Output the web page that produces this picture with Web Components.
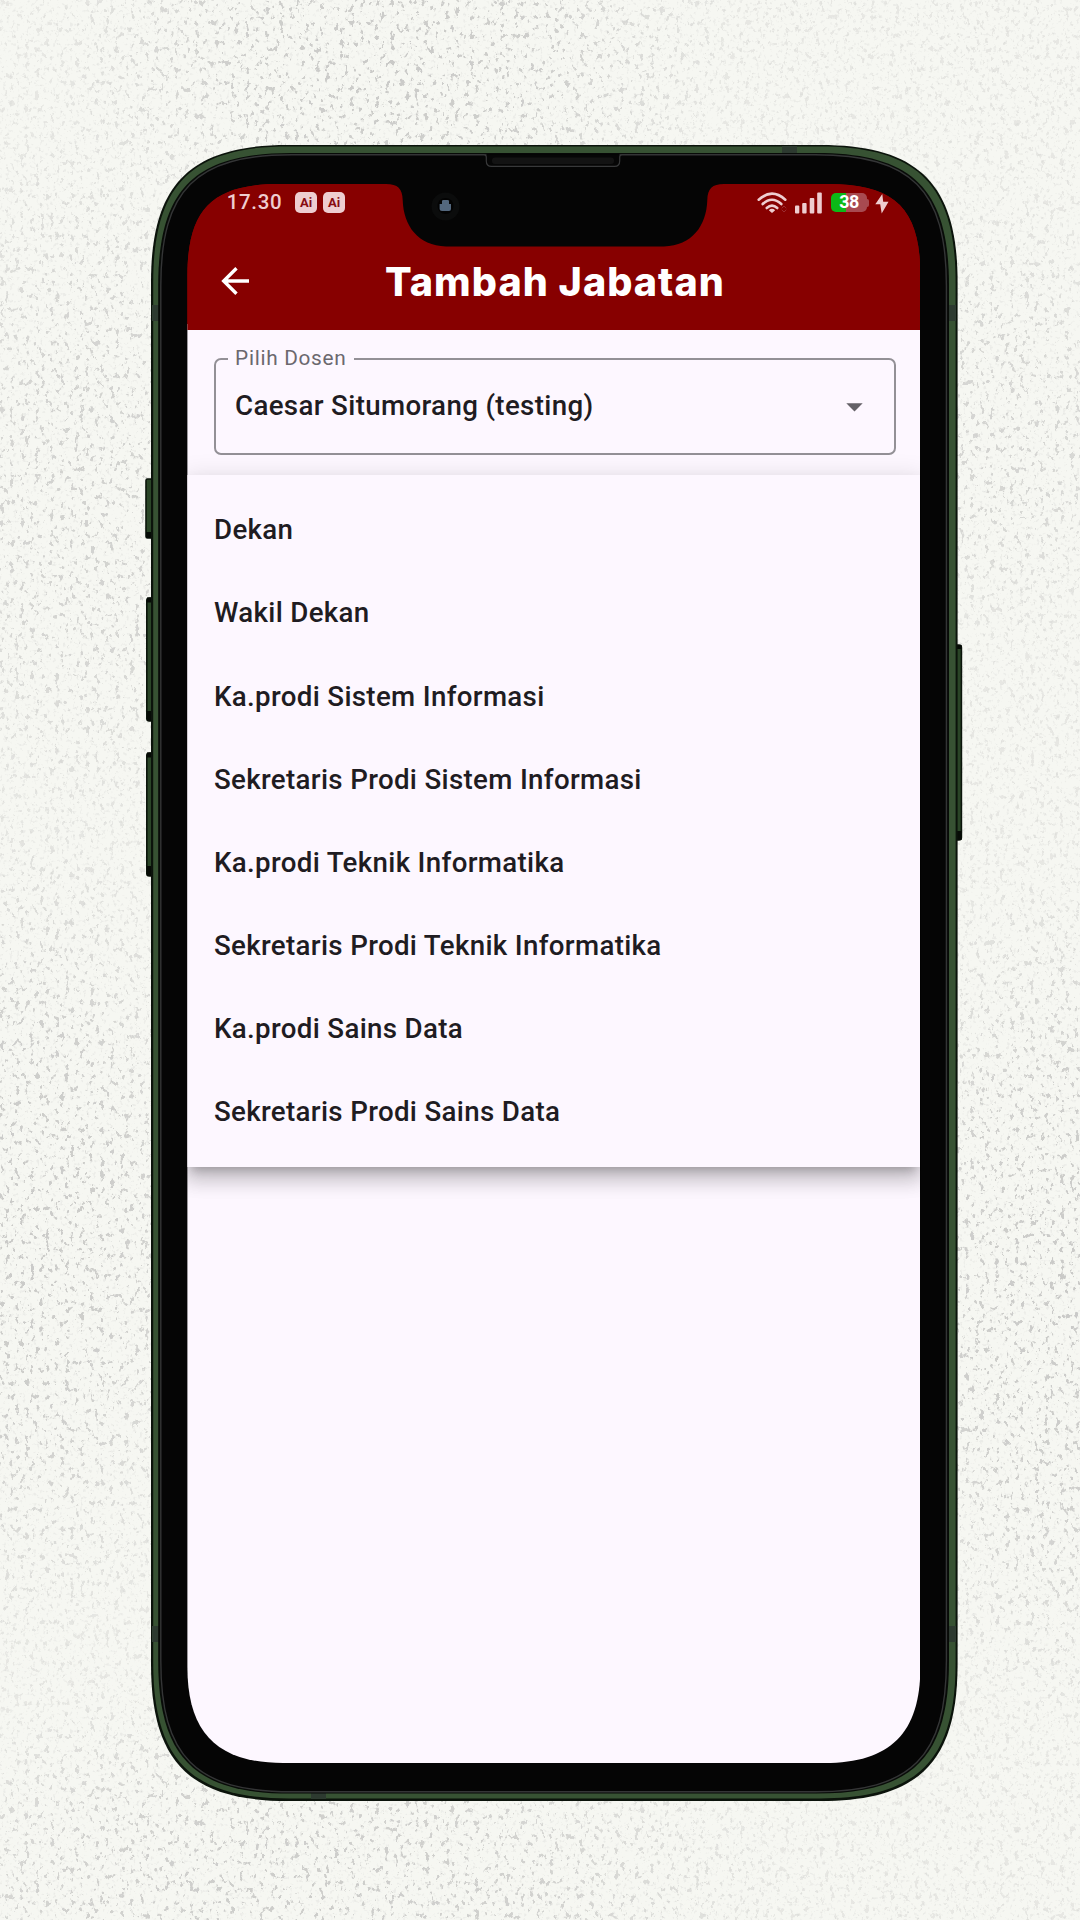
<!DOCTYPE html>
<html lang="id">
<head>
<meta charset="utf-8">
<title>Tambah Jabatan</title>
<style>
  html, body { margin: 0; }
  body { width: 1080px; height: 1920px; overflow: hidden; font-family: Roboto, sans-serif; }
</style>
</head>
<body>
<paper-backdrop>
  <phone-frame>
    <status-bar slot="screen" time="17.30" battery="38"></status-bar>
    <app-bar slot="screen">Tambah Jabatan</app-bar>
    <select-field slot="screen" label="Pilih Dosen">Caesar Situmorang (testing)</select-field>
    <option-menu slot="screen">
      <option-item>Dekan</option-item>
      <option-item>Wakil Dekan</option-item>
      <option-item>Ka.prodi Sistem Informasi</option-item>
      <option-item>Sekretaris Prodi Sistem Informasi</option-item>
      <option-item>Ka.prodi Teknik Informatika</option-item>
      <option-item>Sekretaris Prodi Teknik Informatika</option-item>
      <option-item>Ka.prodi Sains Data</option-item>
      <option-item>Sekretaris Prodi Sains Data</option-item>
    </option-menu>
  </phone-frame>
</paper-backdrop>
<script>
const define = (name, render) => customElements.define(name, class extends HTMLElement {
  constructor() {
    super();
    this.attachShadow({ mode: 'open' });
  }
  connectedCallback() {
    this.shadowRoot.innerHTML = render(this);
  }
});

/* Rounded outline with smooth (continuous-curvature) corners. */
const smooth = (x0, y0, x1, y1, a, c, ab = a, cb = c) =>
  `M${x0 + a},${y0} H${x1 - a} C${x1 - c},${y0} ${x1},${y0 + c} ${x1},${y0 + a} V${y1 - ab} ` +
  `C${x1},${y1 - cb} ${x1 - cb},${y1} ${x1 - ab},${y1} H${x0 + ab} C${x0 + cb},${y1} ${x0},${y1 - cb} ${x0},${y1 - ab} ` +
  `V${y0 + a} C${x0},${y0 + c} ${x0 + c},${y0} ${x0 + a},${y0} Z`;

define('paper-backdrop', () => `
  <style>
    :host { display: block; position: relative; width: 1080px; height: 1920px; background: #f6f7f2; isolation: isolate; }
    .grain { position: absolute; inset: 0; z-index: -1; }
    main { display: flex; padding: 145px 0 0 145px; }
  </style>
  <svg class="grain" width="1080" height="1920" aria-hidden="true">
    <defs>
      <filter id="specks" x="0" y="0" width="100%" height="100%" color-interpolation-filters="sRGB">
        <feTurbulence type="fractalNoise" baseFrequency="0.2 0.15" numOctaves="4" seed="8"/>
        <feColorMatrix values="0 0 0 0 .79  0 0 0 0 .79  0 0 0 0 .78  14 0 0 0 -8.75"/>
      </filter>
      <filter id="fine" x="0" y="0" width="100%" height="100%" color-interpolation-filters="sRGB">
        <feTurbulence type="fractalNoise" baseFrequency="0.3" numOctaves="2" seed="3"/>
        <feColorMatrix values="0 0 0 0 .85  0 0 0 0 .85  0 0 0 0 .84  6 0 0 0 -3.5"/>
      </filter>
      <radialGradient id="g"><stop offset="0" stop-color="#fff"/><stop offset=".5" stop-color="#fff" stop-opacity=".8"/><stop offset="1" stop-color="#fff" stop-opacity="0"/></radialGradient>
      <mask id="patches" maskUnits="userSpaceOnUse" x="0" y="0" width="1080" height="1920">
        <rect width="1080" height="1920" fill="#555"/>
        <ellipse cx="390" cy="60" rx="340" ry="210" fill="url(#g)"/>
        <ellipse cx="90" cy="480" rx="190" ry="360" fill="url(#g)" opacity=".75"/>
        <ellipse cx="20" cy="1230" rx="230" ry="420" fill="url(#g)"/>
        <ellipse cx="1000" cy="420" rx="150" ry="220" fill="url(#g)" opacity=".65"/>
        <ellipse cx="1060" cy="1290" rx="210" ry="430" fill="url(#g)"/>
        <ellipse cx="300" cy="1890" rx="480" ry="220" fill="url(#g)" opacity=".9"/>
      </mask>
    </defs>
    <rect width="1080" height="1920" filter="url(#fine)" opacity=".35"/>
    <g mask="url(#patches)"><rect width="1080" height="1920" filter="url(#specks)"/></g>
  </svg>
  <main><slot></slot></main>`);

define('phone-frame', () => `
  <style>
    :host { display: block; position: relative; width: 818px; height: 1656px; }
    svg { position: absolute; inset: 0; display: block; pointer-events: none; }
    .screen {
      position: relative; display: flex; flex-direction: column; box-sizing: border-box;
      width: 733px; height: 1579px; margin-left: 42.4px; top: 39px;
      background: linear-gradient(#870000 140px, #fdf7ff 140px); clip-path: path('${smooth(0, 0, 733, 1579, 92, 25, 96, 30)}');
    }
  </style>
  <svg width="818" height="1656" viewBox="145 145 818 1656" aria-hidden="true">
    <g fill="#2a4527" stroke="#0b140b" stroke-width="1.6">
      <rect x="146" y="479" width="8" height="59" rx="1.5"/>
      <rect x="146.8" y="598" width="8" height="123" rx="2.5"/>
      <rect x="146.8" y="753" width="8" height="123" rx="2.5"/>
      <rect x="953" y="645" width="8.4" height="195" rx="2.5"/>
    </g>
    <g fill="#060b06">
      <rect x="146" y="532" width="6" height="6"/><rect x="147" y="597.5" width="5" height="5"/><rect x="147" y="711" width="5" height="10"/>
      <rect x="147" y="752.5" width="5" height="5"/><rect x="147" y="866" width="5" height="10"/>
      <rect x="957" y="645" width="4.5" height="4"/><rect x="957" y="831" width="4.5" height="9"/>
    </g>
    <path d="${smooth(151, 145, 957.6, 1801, 137, 39)}" fill="#0b130b"/>
    <path d="${smooth(153.2, 146.4, 955.6, 1798.4, 136, 38)}" fill="#375233"/>
    <g fill="#2d3a30">
      <rect x="782" y="146" width="15" height="7"/><rect x="311" y="1793" width="15" height="6"/>
      <rect x="152" y="305" width="7" height="16"/><rect x="949" y="305" width="7" height="16"/>
      <rect x="152" y="1626" width="7" height="16"/><rect x="949" y="1626" width="7" height="16"/>
    </g>
    <path d="${smooth(158.2, 153, 949, 1793.6, 133, 36)}" fill="#080b08"/>
    <path d="${smooth(160.8, 154.8, 946.4, 1791.8, 131, 35)}" fill="#050505" stroke="#343536" stroke-width="1.4"/>
  </svg>
  <div class="screen"><slot name="screen"></slot></div>
  <svg width="818" height="1656" viewBox="145 145 818 1656" aria-hidden="true">
    <path d="M386,183 V183.9 C398,184 402.3,188.5 402.7,200 C403.5,226 418,245.5 446,246.4 H664 C692,245.5 706.5,226 707.3,200 C707.7,188.5 712,184 724,183.9 V183 Z" fill="#050505"/>
    <rect x="486.5" y="153.5" width="133" height="4" fill="#050505"/>
    <path d="M484.5,154.8 Q486.3,154.8 486.3,157.5 V161 Q486.3,166.4 491.5,166.4 H614.5 Q619.7,166.4 619.7,161 V157.5 Q619.7,154.8 621.5,154.8" fill="#060606" stroke="#38393a" stroke-width="1.2"/>
    <rect x="492" y="157.5" width="122" height="6.5" rx="3" fill="#131313"/>
    <circle cx="445.5" cy="206.5" r="14" fill="#0b0c0c"/>
    <circle cx="445.5" cy="206" r="8" fill="#030303"/>
    <path d="M442,204 V201 Q442,200 443.5,200 H447.5 Q449,200 449,201 V204 H451 V209 Q451,211 449,211 H442 Q439.6,211 439.6,209 V204 Z" fill="#53677d"/>
  </svg>`);

define('status-bar', el => `
  <style>
    :host { display: flex; align-items: flex-start; height: 51px; flex: none; padding: 7.5px 31px 0 39.3px; background: #870000; color: #eecdd0; box-sizing: border-box; }
    .time { font: 500 20.5px/21px Roboto, sans-serif; letter-spacing: .65px; width: 57px; }
    .badges { display: flex; gap: 6.5px; margin-left: 11.7px; }
    .badges b { width: 21.5px; height: 21px; border-radius: 5px; background: #eecdd0; color: #870a10; font: 700 13px/22px Roboto, sans-serif; text-align: center; }
    .right { display: flex; align-items: flex-start; margin-left: auto; }
    .battery { display: flex; align-items: center; justify-content: center; width: 36px; height: 19.5px; margin: 1px 0 0 9px; border-radius: 5px; background: linear-gradient(90deg, #0cba17 15px, #a84a50 15px); color: #fff; font: 700 18px/20px Roboto, sans-serif; letter-spacing: -.8px; }
    .tip { width: 2px; height: 8px; margin-top: 7px; border-radius: 0 2px 2px 0; background: #a84a50; }
    svg { display: block; }
  </style>
  <span class="time">${el.getAttribute('time')}</span>
  <span class="badges"><b>Ai</b><b>Ai</b></span>
  <span class="right">
    <svg width="30" height="22" viewBox="0 0 30 22" fill="none" stroke="#eecdd0" stroke-width="2.6" stroke-linecap="round">
      <path d="M1.7,7.7 Q15,-4.3 28.3,7.7"/><path d="M5.7,12 Q15,3.5 24.3,12"/><path d="M9.7,16 Q15,11.2 20.3,16"/>
      <path d="M11.8,18.2 Q15,15.5 18.2,18.2 L15,21 Z" fill="#eecdd0" stroke="none"/>
      <path d="M25,16 L27,14 L29,16 M25,18 L27,20 L29,18" stroke="#a84a50" stroke-width="1" opacity=".6"/>
    </svg>
    <svg style="margin-left:7.5px" width="27" height="22" viewBox="0 0 27 22" fill="#eecdd0">
      <rect x="0" y="13.5" width="4.3" height="8" rx="1"/><rect x="7.2" y="11" width="4.4" height="10.5" rx="1"/>
      <rect x="14.7" y="6" width="4.6" height="15.5" rx="1"/><rect x="22.2" y=".5" width="4.6" height="21" rx="1"/>
    </svg>
    <span class="battery">${el.getAttribute('battery')}</span><span class="tip"></span>
    <svg style="margin:2px 0 0 6.5px" width="14" height="20" viewBox="0 0 14 20" fill="#eecdd0"><path d="M7.3,0 L.3,10.3 H5.2 L6.7,19.5 L13.5,7.8 H8.2 Z"/></svg>
  </span>`);

define('app-bar', () => `
  <style>
    :host { display: grid; grid-template-columns: 34px 1fr 34px; align-items: center; height: 94.7px; flex: none; box-sizing: border-box; padding: 0 31px 3px; background: #870000; color: #fff; }
    h1 { margin: 2px 0 0 2px; text-align: center; font: 800 39.5px/50px Inter, sans-serif; letter-spacing: 1.05px; white-space: nowrap; }
    svg { display: block; }
  </style>
  <svg width="34" height="34" viewBox="0 0 34 34" fill="none" stroke="#fff" stroke-width="3.4"><path d="M31,17 H5 M18.5,4.3 L5.7,17 L18.5,29.7"/></svg>
  <h1><slot></slot></h1>`);

define('select-field', el => `
  <style>
    :host { display: block; flex: none; height: 145.3px; box-sizing: border-box; padding: 17.3px 24.5px 0 27px; }
    fieldset { display: flex; justify-content: space-between; box-sizing: border-box; height: 107.7px; margin: 0; min-width: 0; padding: 0 31px 0 18.6px; border: 2.2px solid #939096; border-radius: 7px; }
    legend { margin-left: -7.1px; padding: 0 7.5px 0 7.2px; height: 24px; font: 400 20.8px/22.4px Roboto, sans-serif; letter-spacing: .7px; color: #6b686e; }
    .value { padding-top: 18.2px; font: 500 27.7px/34px Roboto, sans-serif; letter-spacing: .35px; color: #1f1c22; white-space: nowrap; }
    svg { display: block; margin-top: 32.2px; }
  </style>
  <fieldset>
    <legend>${el.getAttribute('label')}</legend>
    <span class="value"><slot></slot></span>
    <svg width="17" height="9" viewBox="0 0 17 9"><path d="M.3,.3 H16.7 L8.5,8.6 Z" fill="#646167"/></svg>
  </fieldset>`);

define('option-menu', () => `
  <style>
    :host { display: flex; flex-direction: column; flex: none; box-sizing: border-box; height: 692.3px; padding: 13.9px 0; background: #fdf7ff; position: relative;
      box-shadow: 0 8.7px 8.7px -5.2px rgba(0,0,0,.2), 0 13.8px 17.3px 1.7px rgba(0,0,0,.14), 0 5.2px 24px 3.5px rgba(0,0,0,.12); }
  </style>
  <slot></slot>`);

define('option-item', () => `
  <style>
    :host { display: flex; align-items: center; flex: 1; padding-left: 26.6px; font: 500 27.7px/34px Roboto, sans-serif; letter-spacing: .33px; color: #1f1c22; white-space: nowrap; }
  </style>
  <slot></slot>`);
</script>
</body>
</html>
